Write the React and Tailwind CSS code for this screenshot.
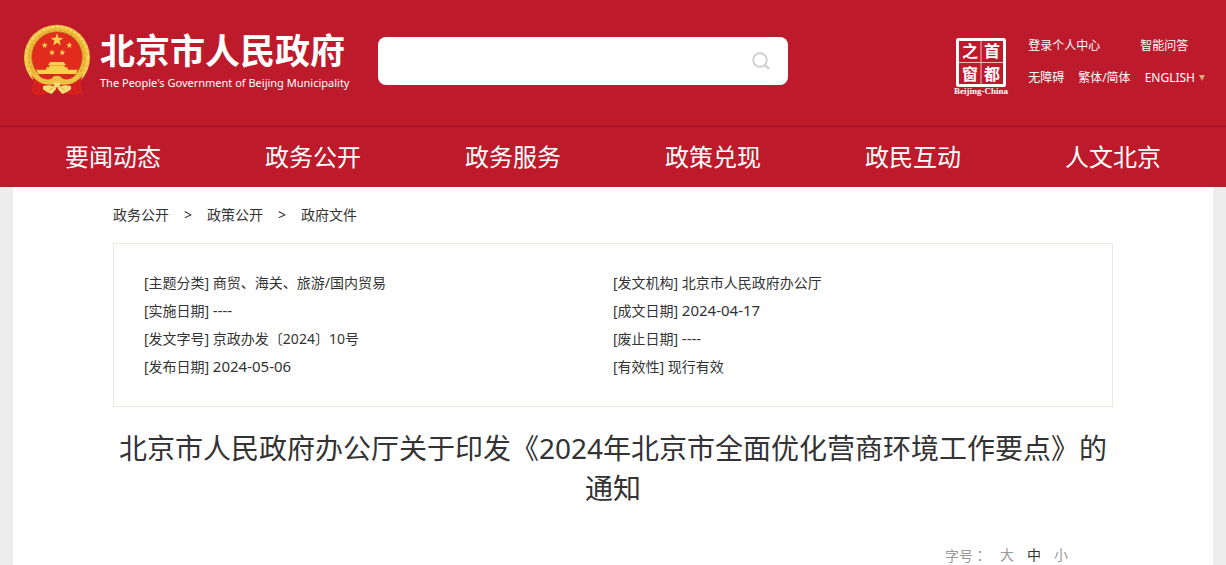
import React from 'react';

const navItems = ['要闻动态', '政务公开', '政务服务', '政策兑现', '政民互动', '人文北京'];

const crumbs = ['政务公开', '政策公开', '政府文件'];

const details = [
  { label: '主题分类', value: '商贸、海关、旅游/国内贸易' },
  { label: '发文机构', value: '北京市人民政府办公厅' },
  { label: '实施日期', value: '----', isDate: true },
  { label: '成文日期', value: '2024-04-17', isDate: true },
  { label: '发文字号', value: '京政办发〔2024〕10号' },
  { label: '废止日期', value: '----', isDate: true },
  { label: '发布日期', value: '2024-05-06', isDate: true },
  { label: '有效性', value: '现行有效' },
];

function Star({ x, y, r }) {
  return (
    <path
      d="M0-10 2.4-3.2 9.5-3.1 3.8 1.2 5.9 8.1 0 4-5.9 8.1-3.8 1.2-9.5-3.1-2.4-3.2Z"
      transform={`translate(${x} ${y}) scale(${r / 10})`}
    />
  );
}

function Emblem() {
  return (
    <svg className="h-[72px] w-[68px] shrink-0" viewBox="38 28 204 216" aria-hidden="true">
      <circle cx="140" cy="129" r="99" fill="#edbb3c" />
      <circle cx="140" cy="129" r="93" fill="none" stroke="#f7d766" strokeWidth="7" strokeDasharray="9 5" />
      <circle cx="140" cy="129" r="82" fill="none" stroke="#e3a62c" strokeWidth="4" strokeDasharray="11 6" />
      <circle cx="140" cy="127" r="76" fill="#e02b1d" stroke="#b8781a" strokeWidth="2" />
      <g fill="#f6d24d">
        <Star x={140} y={76} r={20} />
        <Star x={103} y={92} r={10} />
        <Star x={177} y={92} r={10} />
        <Star x={125} y={114} r={10} />
        <Star x={156} y={114} r={10} />
        <path d="M120 142h40l7 9h-54zM117 152h46v6h-46zM109 158h62l2 9h-66zM78 165h124l-5 13H83z" />
      </g>
      <path d="M83 178h114l-16 18H99z" fill="#d62a1e" />
      {/* red silk on both sides */}
      <path
        d="M64 178q4 16 22 22l28 4 4 30-30 8-24-6 6-30zM216 178q-4 16-22 22l-28 4-4 30 30 8 24-6-6-30z"
        fill="#d8221d"
      />
      <path
        d="M80 204 76 232M94 212 90 236M200 204 204 232M186 212 190 236"
        stroke="#b8151b"
        strokeWidth="2"
        fill="none"
      />
      <path d="M72 172q14 18 34 22 18 2 22-8 12-6 24 0 4 10 22 8 20-4 34-22l-4 22q-18 18-42 16l-22-6-22 6q-24 2-42-16z" fill="#efc044" />
      <path d="M96 210h88l-8 14-36 10-36-10z" fill="#cf1d1c" />
      <path d="M130 204q10-6 20 0l-2 12q-8 5-16 0zM98 214q22-6 36 2l4 6-14 16q-12-2-26-14zM182 214q-22-6-36 2l-4 6 14 16q12-2 26-14z" fill="#f7dc74" />
      <path d="M128 218 118 226M152 218 162 226" stroke="#c58a22" strokeWidth="2" />
    </svg>
  );
}

function Seal() {
  return (
    <svg className="h-[60px] w-[58px] shrink-0" viewBox="0 0 58 60" fill="#fff">
      <rect x="5.5" y="3.5" width="47" height="46" rx="1" fill="none" stroke="#fff" strokeWidth="3" />
      <path d="M29 5v43M7 26.5h44" stroke="#fff" strokeWidth="1" opacity=".7" />
      <g className="font-['Noto_Sans_CJK_SC',sans-serif] text-[16px] font-bold" textAnchor="middle">
        <text x="18" y="21">之</text>
        <text x="40" y="21">首</text>
        <text x="18" y="44">窗</text>
        <text x="40" y="44">都</text>
      </g>
      <text x="29" y="58" textAnchor="middle" className="font-['Liberation_Serif',serif] text-[9px] font-bold">
        Beijing-China
      </text>
    </svg>
  );
}

function Header() {
  return (
    <header className="bg-[#bd1b2c] text-white">
      <div className="mx-auto flex h-[126px] max-w-[1200px] items-start pr-[6px] pl-[10px]">
        <a href="#" className="mt-6 flex shrink-0 items-start">
          <Emblem />
          <span className="ml-[9px] w-[250px]">
            <span className="mt-2 block text-[35px] leading-[38px] font-bold">北京市人民政府</span>
            <span className="mt-[5px] block text-[11px] leading-4 whitespace-nowrap">
              The People's Government of Beijing Municipality
            </span>
          </span>
        </a>
        <form className="mt-[37px] ml-7 flex h-12 w-[410px] shrink-0 items-center rounded-lg bg-white pr-[18px]">
          <input
            type="text"
            aria-label="搜索"
            className="h-full min-w-0 flex-1 px-4 text-base text-[#333] outline-none"
          />
          <button type="submit" aria-label="搜索" className="cursor-pointer">
            <svg className="h-[18px] w-[18px]" viewBox="0 0 18 18" fill="none" stroke="#ccc" strokeWidth="1.7">
              <circle cx="8" cy="8" r="6.8" />
              <path d="m13 13 4 4" strokeWidth="2" />
            </svg>
          </button>
        </form>
        <div className="mt-9 ml-auto flex items-start">
          <a href="#" aria-label="首都之窗">
            <Seal />
          </a>
          <div className="ml-[18px] text-[12px] leading-5">
            <div className="flex">
              <a href="#">登录个人中心</a>
              <a href="#" className="ml-10">智能问答</a>
            </div>
            <div className="mt-3 flex">
              <a href="#">无障碍</a>
              <a href="#" className="ml-[14px]">繁体/简体</a>
              <a href="#" className="ml-[14px] flex items-center">
                ENGLISH
                <svg className="mr-[2px] ml-1 h-[6px] w-[6px]" viewBox="0 0 6 6" fill="#dba574">
                  <path d="M0 0h6L3 6z" />
                </svg>
              </a>
            </div>
          </div>
        </div>
      </div>
      <nav className="border-t border-[#8f1522]">
        <ul className="mx-auto flex max-w-[1200px]">
          {navItems.map((item) => (
            <li key={item} className="flex-1 text-center">
              <a href="#" className="block text-2xl leading-[60px]">{item}</a>
            </li>
          ))}
        </ul>
      </nav>
    </header>
  );
}

function App() {
  return (
    <div className="flex min-h-screen flex-col bg-[#ededed] font-['Noto_Sans','Noto_Sans_CJK_SC',sans-serif] text-[#333]">
      <Header />
      <main className="mx-auto w-full max-w-[1200px] flex-1 bg-white px-[100px]">
        <div className="flex text-sm leading-[56px]">
          {crumbs.map((crumb, i) => (
            <React.Fragment key={crumb}>
              {i > 0 && <span className="mx-[15px]">&gt;</span>}
              <a href="#">{crumb}</a>
            </React.Fragment>
          ))}
        </div>

        <ul className="grid grid-cols-2 border border-[#e9e9e1] px-[30px] py-[25px] text-sm leading-7">
          {details.map((d) => (
            <li key={d.label}>
              [{d.label}] <span className={d.isDate ? 'text-[15px] leading-none' : ''}>{d.value}</span>
            </li>
          ))}
        </ul>

        <h1 className="mt-[21px] text-center text-[28px] leading-10">
          北京市人民政府办公厅关于印发《2024年北京市全面优化营商环境工作要点》的通知
        </h1>

        <div className="mt-[37px] flex justify-end gap-[13px] pr-[45px] text-sm leading-5 text-[#999]">
          <span className="font-['Noto_Sans_CJK_TC',sans-serif]">字号：</span>
          <button className="cursor-pointer">大</button>
          <button className="cursor-pointer text-[#333]">中</button>
          <button className="cursor-pointer">小</button>
        </div>
      </main>
    </div>
  );
}

export default App;
